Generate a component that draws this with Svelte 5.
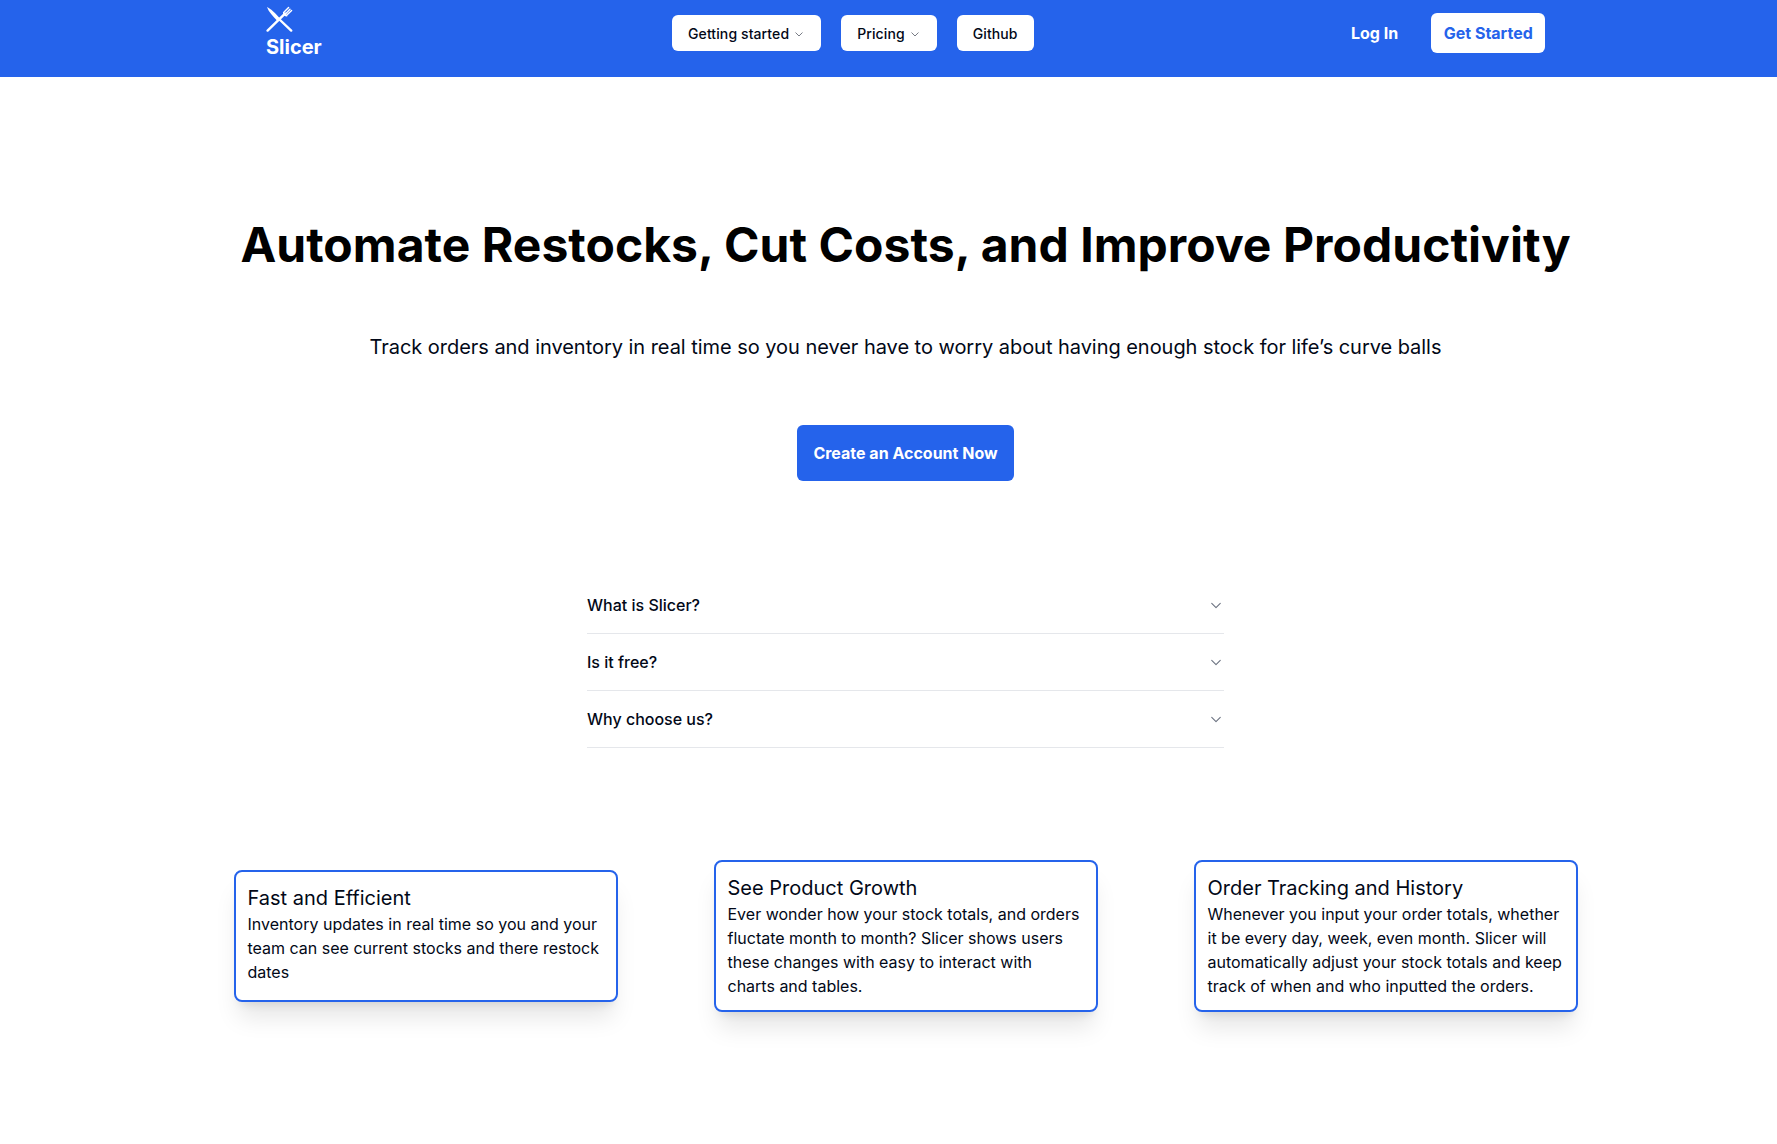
<script>
    const faqs = ["What is Slicer?", "Is it free?", "Why choose us?"];

    const features = [
        {
            title: "Fast and Efficient",
            text: "Inventory updates in real time so you and your team can see current stocks and there restock dates"
        },
        {
            title: "See Product Growth",
            text: "Ever wonder how your stock totals, and orders fluctate month to month? Slicer shows users these changes with easy to interact with charts and tables."
        },
        {
            title: "Order Tracking and History",
            text: "Whenever you input your order totals, whether it be every day, week, even month. Slicer will automatically adjust your stock totals and keep track of when and who inputted the orders."
        }
    ];
</script>

{#snippet chevron(size)}
    <svg class="chevron" width={size} height={size} viewBox="0 0 15 15" fill="none">
        <path d="M3.5 6 7.5 10 11.5 6" stroke="currentColor" stroke-width="1" stroke-linecap="round" stroke-linejoin="round" />
    </svg>
{/snippet}

<div class="page">
    <header class="header">
        <div class="logo">
            <svg width="27" height="26" viewBox="0 0 27 26" fill="none">
                <path d="M1 1 C4.5 2.5 9 7 14 12.5 L11.4 15 C6.5 10 2.5 5.5 1 1Z" fill="#fff" />
                <path d="M13 13 25.2 24.6" stroke="#fff" stroke-width="2.4" stroke-linecap="round" />
                <path d="M1.6 24.6 19 7.6" stroke="#fff" stroke-width="2.4" stroke-linecap="round" />
                <path d="M17.6 6.6 22.6 1.4M19.2 8.2 24 3.2M20.4 9.6 25.6 4.4M17.6 6.6 C18 8.8 19 9.8 20.8 9.8" stroke="#fff" stroke-width="1.4" stroke-linecap="round" />
            </svg>
            <span>Slicer</span>
        </div>
        <nav class="nav">
            <button class="nav-btn">Getting started {@render chevron(12)}</button>
            <button class="nav-btn">Pricing {@render chevron(12)}</button>
            <button class="nav-btn">Github</button>
        </nav>
        <div class="actions">
            <a class="login" href="#login">Log In</a>
            <button class="start">Get Started</button>
        </div>
    </header>

    <main class="main">
        <h1>Automate Restocks, Cut Costs, and Improve Productivity</h1>
        <p class="sub">Track orders and inventory in real time so you never have to worry about having enough stock for life’s curve balls</p>
        <button class="cta">Create an Account Now</button>

        <div class="faq">
            {#each faqs as q}
                <div class="faq-row">
                    <span>{q}</span>
                    {@render chevron(16)}
                </div>
            {/each}
        </div>

        <section class="cards">
            {#each features as f}
                <article class="card">
                    <h3>{f.title}</h3>
                    <p>{f.text}</p>
                </article>
            {/each}
        </section>
    </main>
</div>

<style>
    :global(body) {
        overflow: hidden;
        background: #fff;
    }

    .page {
        width: 1811px;
        height: 1144px;
        font-family: Inter, "Liberation Sans", sans-serif;
        color: #020817;
    }

    button {
        font-family: inherit;
        border: none;
        cursor: pointer;
    }

    /*===Header===*/
    .header {
        height: 77px;
        background-color: #2563eb;
        display: flex;
        align-items: flex-start;
        padding-left: 266px;
    }

    .logo {
        width: 406px;
        padding-top: 6px;
        box-sizing: border-box;
        display: flex;
        flex-direction: column;
        align-items: flex-start;
        color: #fff;
        font-size: 20px;
        font-weight: 700;
        line-height: 28px;
    }

    .logo svg {
        display: block;
    }

    .logo span {
        margin-top: 1px;
    }

    .nav {
        display: flex;
        gap: 20px;
        width: 678px;
        margin-top: 15px;
    }

    .nav-btn {
        height: 36px;
        padding: 0 16px;
        background: #fff;
        color: #020817;
        border-radius: 6px;
        font-size: 14px;
        font-weight: 500;
        letter-spacing: 0.1px;
        display: flex;
        align-items: center;
        gap: 4px;
    }

    .nav-btn .chevron {
        color: #555b66;
        margin-top: 2px;
    }

    .actions {
        display: flex;
        align-items: center;
        gap: 33px;
        margin-top: 13px;
        margin-left: 1px;
    }

    .login {
        color: #fff;
        font-size: 16px;
        font-weight: 700;
        text-decoration: none;
    }

    .start {
        height: 40px;
        padding: 0 12.5px;
        background: #fff;
        color: #2563eb;
        border-radius: 6px;
        font-size: 16px;
        font-weight: 700;
    }

    /*===Hero===*/
    .main {
        display: flex;
        flex-direction: column;
        align-items: center;
        padding-top: 144px;
    }

    h1 {
        margin: 0;
        font-size: 48px;
        line-height: 48px;
        font-weight: 700;
        letter-spacing: 0.04px;
        color: #000;
    }

    .sub {
        margin: 64px 0 0;
        font-size: 20px;
        line-height: 28px;
        letter-spacing: -0.04px;
        color: #020817;
    }

    .cta {
        margin-top: 64px;
        height: 56px;
        padding: 0 16px;
        background: #2563eb;
        color: #fff;
        border-radius: 6px;
        font-size: 16px;
        font-weight: 700;
    }

    /*===Accordion===*/
    .faq {
        width: 637px;
        margin-top: 96px;
    }

    .faq-row {
        height: 56px;
        border-bottom: 1px solid #e5e7eb;
        display: flex;
        align-items: center;
        justify-content: space-between;
        font-size: 16px;
        font-weight: 500;
    }

    .faq-row .chevron {
        color: #6b7280;
    }

    /*===Feature cards===*/
    .cards {
        margin-top: 112px;
        display: flex;
        align-items: center;
        gap: 96px;
    }

    .card {
        width: 384px;
        min-height: 132px;
        box-sizing: border-box;
        padding: 12px;
        border: 2px solid #2563eb;
        border-radius: 8px;
        background: #fff;
        box-shadow: 0 20px 25px -5px rgb(0 0 0 / 0.1), 0 8px 10px -6px rgb(0 0 0 / 0.1);
    }

    .card h3 {
        margin: 0;
        font-size: 20px;
        line-height: 28px;
        font-weight: 400;
        font-variant-ligatures: none;
    }

    .card p {
        margin: 0;
        font-size: 16px;
        line-height: 24px;
    }
</style>
